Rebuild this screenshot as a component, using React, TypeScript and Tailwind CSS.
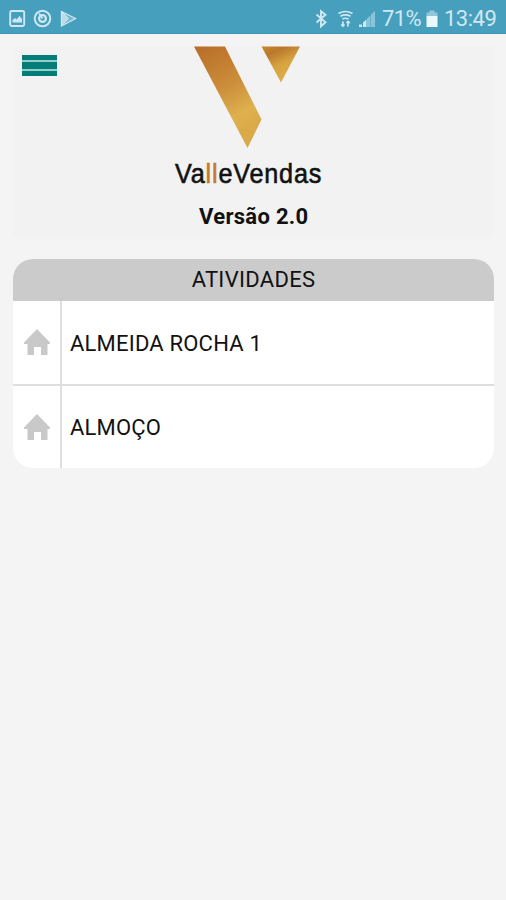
const activities = ["ALMEIDA ROCHA 1", "ALMOÇO"];

function StatusBar() {
  return (
    <div className="flex h-[34px] items-center justify-between border-b border-[#3d93b2] bg-[#479fbe] pt-[2px] text-[#cfe8f1]">
      <svg width="80" height="32" viewBox="0 0 80 32" fill="none" stroke="currentColor">
        <rect x="10.2" y="9" width="14" height="15" rx="1.5" strokeWidth="1.9" />
        <path d="M12.500 20.500v-2.500l2.500-2 1.500 1.500 3-3.500 2.500 3v3.500z" fill="currentColor" stroke="none" />
        <circle cx="42.500" cy="16.500" r="7.800" strokeWidth="1.900" />
        <circle cx="42.500" cy="16.500" r="3.400" strokeWidth="2.200" />
        <path d="M42.500 16.500l-3.500-5" strokeWidth="1.600" />
        <path d="M61.500 9.500v14.500l14-7.500z" fill="currentColor" fillOpacity=".35" strokeWidth="1.300" />
        <path d="M61.500 9.500l7 7-7 7.500z" fill="currentColor" fillOpacity=".75" strokeWidth="1" />
      </svg>
      <div className="flex items-center">
        <svg width="70" height="32" viewBox="312 0 70 32" fill="none" stroke="currentColor">
          <path d="M316.500 12.500l9 7.800-4.500 4V9.200l4.500 3.500-9 7.800" strokeWidth="1.900" />
          <g strokeWidth="1.700">
            <path d="M338.500 11.500q7-4 14 0M340.500 14.200q5-2.500 10 0M342.500 17q3-1.500 6 0" />
            <path d="M343 19.500v4.500m-1.800-1.500l1.800 1.500 1.500-1.500M348 24.500v-5m-1.500 1.500l1.500-1.500 1.800 1.500" />
          </g>
          <g fill="currentColor" stroke="none">
            <path d="M359 22.500h3V25h-3zM363 20.500l3.500-3V25H363z" />
            <path d="M367 16.500l3.500-3V25H367zM371 12.500l4-3.500v16h-4z" opacity=".5" />
          </g>
        </svg>
        <span className="w-[42px] whitespace-nowrap pt-[2px] text-[22px] leading-8 tracking-[-0.6px]">71%</span>
        <svg width="20" height="32" viewBox="424 0 20 32" fill="currentColor">
          <path d="M429.500 8.500h5v2h3v3.500h-11v-3.500h3z" opacity=".55" />
          <path d="M426.500 14h11v11h-11z" className="text-[#eaf7fb]" />
        </svg>
        <span className="w-[62px] whitespace-nowrap pt-[2px] text-[22px] leading-8 tracking-[-0.5px]">13:49</span>
      </div>
    </div>
  );
}

function Logo() {
  return (
    <svg className="ml-[-1px]" width="108" height="103" viewBox="193 46 108 103">
      <defs>
        <linearGradient id="stem" x1="0" y1="0" x2=".35" y2="1">
          <stop offset="0" stopColor="#b86b27" />
          <stop offset=".5" stopColor="#cc8e3a" />
          <stop offset=".8" stopColor="#deb04e" />
          <stop offset="1" stopColor="#dba947" />
        </linearGradient>
        <linearGradient id="tip" x1="0" y1="0" x2=".5" y2="1">
          <stop offset="0" stopColor="#c98a2b" />
          <stop offset=".25" stopColor="#b9782e" />
          <stop offset=".6" stopColor="#d8a33f" />
          <stop offset="1" stopColor="#ddb048" />
        </linearGradient>
      </defs>
      <path d="M194 46.500h31l36.500 73-14 28.500z" fill="url(#stem)" />
      <path d="M261.500 46.500H300l-19 36z" fill="url(#tip)" />
    </svg>
  );
}

function HomeIcon() {
  return (
    <svg width="26" height="26" viewBox="0 0 26 26" fill="#c9c9c9">
      <path d="M13 0L26 13.500v1.500h-2.500v11h-6.500v-8h-7v8H3.500V15H0v-1.500z" />
    </svg>
  );
}

export default function App() {
  return (
    <div className="min-h-[900px] w-[506px] bg-[#f4f4f4] font-[Roboto,sans-serif] text-[#111]">
      <StatusBar />
      <header className="mx-[13px] mt-[12px] flex h-[190px] w-[481px] bg-[#f2f2f2]">
        <button type="button" aria-label="Menu" className="ml-[9px] mt-[9px] flex h-[21px] w-[35px] flex-col gap-[2px] bg-[#8fd0cc]">
          <span className="h-[5px] w-full bg-[#067c78]" />
          <span className="h-[7px] w-full bg-[#067c78]" />
          <span className="h-[5px] w-full bg-[#067c78]" />
        </button>
        <div className="ml-[116px] flex w-[150px] flex-col">
          <div className="pl-[21px]">
            <Logo />
          </div>
          <div className="ml-[2px] mt-[8px] h-[34px] origin-left scale-x-[0.9] whitespace-nowrap font-['Liberation_Sans',sans-serif] text-[28px] leading-[34px] tracking-[0.9px] [-webkit-text-stroke:0.6px]">
            Va<span className="text-[#c17a2a]">ll</span>eVendas
          </div>
          <div className="ml-[26px] mt-[13px] whitespace-nowrap text-[22px] font-bold leading-[26px] tracking-[0.3px]">Versão 2.0</div>
        </div>
      </header>
      <main className="mx-[13px] mt-[23px] w-[481px] overflow-hidden rounded-[20px] bg-white">
        <h1 className="h-[42px] bg-[#cbcbcb] text-center text-[22px] leading-[42px] tracking-[0.3px]">ATIVIDADES</h1>
        <ul className="divide-y-2 divide-[#dedede]">
          {activities.map((name) => (
            <li key={name} className="flex h-[85px] items-stretch leading-[85px] last:h-[82px] last:leading-[83px]">
              <div className="flex w-[49px] items-start justify-center border-r-2 border-[#dedede] pt-[28px]">
                <HomeIcon />
              </div>
              <span className="pl-[8px] text-[22px] tracking-[0.2px] [line-height:inherit]">{name}</span>
            </li>
          ))}
        </ul>
      </main>
    </div>
  );
}
